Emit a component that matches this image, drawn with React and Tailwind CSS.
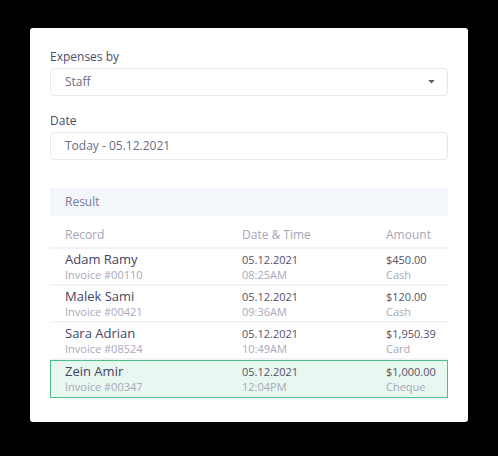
const rows = [
  { name: 'Adam Ramy', invoice: 'Invoice #00110', date: '05.12.2021', time: '08:25AM', amount: '$450.00', method: 'Cash' },
  { name: 'Malek Sami', invoice: 'Invoice #00421', date: '05.12.2021', time: '09:36AM', amount: '$120.00', method: 'Cash' },
  { name: 'Sara Adrian', invoice: 'Invoice #08524', date: '05.12.2021', time: '10:49AM', amount: '$1,950.39', method: 'Card' },
  { name: 'Zein Amir', invoice: 'Invoice #00347', date: '05.12.2021', time: '12:04PM', amount: '$1,000.00', method: 'Cheque', active: true },
];

export default function App() {
  return (
    <div
      className="w-[498px] h-[456px] bg-black pt-[28px] pl-[30px]"
      style={{ fontFamily: '"Open Sans", "Noto Sans", sans-serif' }}
    >
      <div className="w-[438px] h-[394px] bg-white rounded-[3px] px-5 pt-[20px]">
        <label className="block text-[12px] leading-[18px] text-[#4b4b68]">Expenses by</label>
        <div className="mt-[2px] h-[28px] border border-[#e6e9ef] rounded-[4px] flex items-center justify-between pl-[14px] pr-[12px]">
          <span className="text-[12px] text-[#6b6b85]">Staff</span>
          <svg width="7" height="4" viewBox="0 0 8 5" className="text-[#5a5a78]">
            <path d="M0 0h8L4 4.5z" fill="currentColor" />
          </svg>
        </div>

        <label className="block mt-[16px] text-[12px] leading-[18px] text-[#4b4b68]">Date</label>
        <div className="mt-[2px] h-[28px] border border-[#e6e9ef] rounded-[4px] flex items-center pl-[14px]">
          <span className="text-[12px] text-[#6b6b85]">Today - 05.12.2021</span>
        </div>

        <div className="mt-[28px] h-[28px] bg-[#f3f6fa] flex items-center pl-[15px] text-[12px] text-[#7a7a94]">
          Result
        </div>

        <div className="mt-[7px] shadow-[0_0_2px_rgba(0,0,0,0.06)] rounded-[3px]">
          <div className="grid grid-cols-[177px_144px_1fr] h-[26px] items-center pl-[15px] text-[12px] text-[#a5a5b8] border-b-2 border-[#f1f3f6]">
            <span>Record</span>
            <span>Date &amp; Time</span>
            <span>Amount</span>
          </div>
          {rows.map((r) => (
            <div
              key={r.name}
              className={
                r.active
                  ? 'grid grid-cols-[177px_144px_1fr] h-[38px] items-center pl-[14px] border border-[#4cc08b] bg-[#e8f7ef]'
                  : 'grid grid-cols-[177px_144px_1fr] h-[37px] items-center pl-[15px] border-b-2 border-[#f1f3f6]'
              }
            >
              <div className="flex flex-col leading-[15px]">
                <span className="text-[13px] text-[#45455f]">{r.name}</span>
                <span className="text-[11px] text-[#a8a8ba]">{r.invoice}</span>
              </div>
              <div className="flex flex-col leading-[15px]">
                <span className="text-[11px] text-[#52526c]">{r.date}</span>
                <span className="text-[11px] text-[#a8a8ba]">{r.time}</span>
              </div>
              <div className="flex flex-col leading-[15px]">
                <span className="text-[11px] text-[#52526c]">{r.amount}</span>
                <span className="text-[11px] text-[#a8a8ba]">{r.method}</span>
              </div>
            </div>
          ))}
        </div>
      </div>
    </div>
  );
}
